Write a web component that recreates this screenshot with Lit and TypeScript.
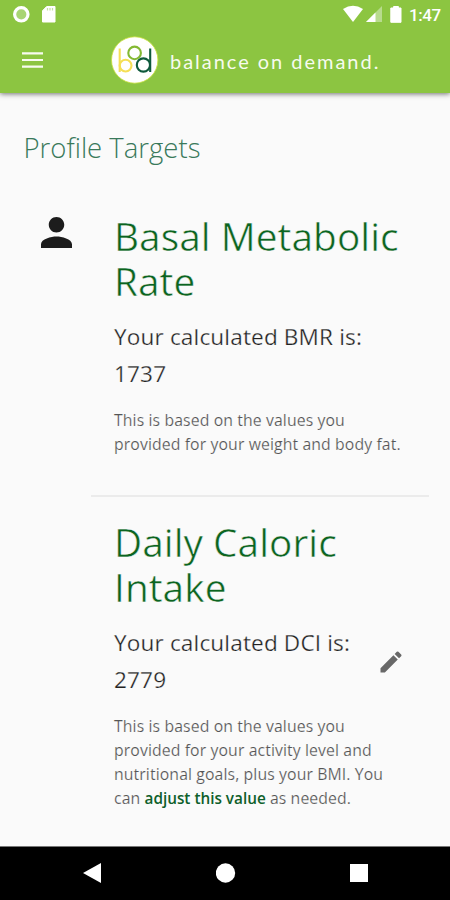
import { LitElement, html, svg, css } from "lit";
import { customElement } from "lit/decorators.js";

@customElement("status-bar")
class StatusBar extends LitElement {
  static styles = css`
    :host { display: flex; height: 28px; padding: 0 9px 0 12px; justify-content: space-between; align-items: center; box-sizing: border-box; color: #fff; }
    .group { display: flex; align-items: center; }
    svg { display: block; }
    .card { margin-left: 11px; }
    .signal { margin-left: 3px; }
    .battery { margin-left: 8px; }
    .time { margin-left: 7px; font: 500 17px/28px Roboto, sans-serif; width: 32px; white-space: nowrap; padding-top: 2px; letter-spacing: -0.4px; }
  `;
  render() {
    return html`
      <div class="group">
        <svg width="19" height="28"><circle cx="9.3" cy="14.3" r="6.7" fill="#a9d573" stroke="#fff" stroke-width="3.2"/></svg>
        <svg class="card" width="14" height="28"><path d="M4.7 6.5H13V22H.5V10.7Z" fill="#fff" stroke="#fff" stroke-linejoin="round"/><path d="M5.5 8V10.5M8 8V10.5M10.5 8V10.5" stroke="#c4e2a0" stroke-width="1.2"/></svg>
      </div>
      <div class="group">
        <svg width="20" height="28"><path d="M0 9Q10 2.5 20 9L10 22Z" fill="#fff"/></svg>
        <svg class="signal" width="16" height="28"><path d="M0 22L16 6V22Z" fill="#b8db8d"/><path d="M0 22L9.5 12.5V22Z" fill="#fff"/></svg>
        <svg class="battery" width="12" height="28"><path d="M3.6 6.5H8.4V8H11V22.3H.8V8H3.6Z" fill="#fff" stroke="#fff" stroke-linejoin="round"/></svg>
        <span class="time">1:47</span>
      </div>`;
  }
}

@customElement("brand-bar")
class BrandBar extends LitElement {
  static styles = css`
    :host { display: flex; height: 65px; align-items: center; box-sizing: border-box; padding-left: 22px; color: #fff; }
    svg { display: block; flex: none; }
    .menu { margin-bottom: 1px; }
    .logo { margin: 0 0 1px 67px; }
    .name { margin-left: 11px; font: 400 20px/28px Lato, sans-serif; letter-spacing: 1.97px; white-space: nowrap; color: #f7fbef; }
  `;
  render() {
    return html`
      <svg class="menu" width="22" height="16" viewBox="0 0 22 16"><path d="M0 1.4H21M0 8H21M0 14.6H21" stroke="#f7fbef" stroke-width="2.2"/></svg>
      <svg class="logo" width="48" height="48" viewBox="0 0 48 48" fill="none">
        <circle cx="23.7" cy="24" r="23.2" fill="#fff" stroke="#c9df3a" stroke-width=".8"/>
        <g stroke="#f5df55" stroke-width="2.1"><path d="M8.7 12.5V36"/><circle cx="14.6" cy="29.6" r="5.9"/></g>
        <circle cx="23.6" cy="16.9" r="6.3" stroke="#84b933" stroke-width="2.1"/>
        <g stroke="#0f5a3c" stroke-width="2.1"><path d="M39.2 12.5V36"/><circle cx="32.4" cy="29" r="6.6"/></g>
      </svg>
      <span class="name">balance on demand.</span>`;
  }
}

const personIcon = svg`<path d="M12 12c2.21 0 4-1.79 4-4s-1.79-4-4-4-4 1.79-4 4 1.79 4 4 4zm0 2c-2.67 0-8 1.34-8 4v2h16v-2c0-2.66-5.33-4-8-4z"/>`;
const pencilIcon = svg`<path d="M3 17.25V21h3.75L17.81 9.94l-3.75-3.75L3 17.25zM20.71 7.04a.996.996 0 0 0 0-1.41l-2.34-2.34a.996.996 0 0 0-1.41 0l-1.83 1.83 3.75 3.75 1.83-1.83z"/>`;

@customElement("app-root")
class AppRoot extends LitElement {
  static styles = css`
    :host { display: flex; flex-direction: column; height: 900px; background: #fafafa; font-family: "Open Sans", sans-serif; overflow: hidden; }
    .top { background: #8cc541; height: 92.5px; flex: none; box-shadow: 0 1px 5px rgba(0, 0, 0, .55); }
    .content { flex: 1; min-height: 0; }
    .page-title { margin: 35.5px 0 0 23.5px; font-size: 27.5px; line-height: 40px; font-weight: 300; color: #39795a; white-space: nowrap; }
    .item { display: grid; grid-template-columns: 114px minmax(0, 1fr); }
    .item.first { margin-top: 46px; height: 281px; }
    .item.second { grid-template-columns: 114px minmax(0, 1fr) 30px; padding: 23px 43px 0 0; }
    .person { display: block; fill: #1c1c1c; margin: 2.5px 0 0 41px; }
    .divider { height: 2px; margin: 0 21px 0 91px; background: #ebebeb; }
    h2 { margin: 0; font-size: 38.8px; line-height: 44.7px; font-weight: 400; letter-spacing: .05px; color: #0c6420; -webkit-text-stroke: .5px #fafafa; white-space: nowrap; }
    .value { margin: 16px 0 0; font-size: 22.6px; line-height: 36.5px; color: #222; font-weight: 400; letter-spacing: .14px; -webkit-text-stroke: .25px #fafafa; white-space: nowrap; }
    .note { margin: 16px 0 0; font-size: 15.8px; line-height: 24px; color: #555; font-weight: 400; letter-spacing: .1px; -webkit-text-stroke: .15px #fafafa; white-space: nowrap; }
    .note b { font-weight: 600; font-size: 15.3px; letter-spacing: 0; color: #0e5f2a; -webkit-text-stroke: 0; }
    .edit { display: block; fill: #686868; margin-top: 127.5px; }
    .nav { height: 54px; flex: none; background: #000; border-top: 1px solid #777; box-sizing: border-box; display: flex; justify-content: space-between; align-items: center; padding: 0 82px 2px 83px; }
  `;
  render() {
    return html`
      <header class="top"><status-bar></status-bar><brand-bar></brand-bar></header>
      <main class="content">
        <div class="page-title">Profile Targets</div>
        <section class="item first">
          <svg class="person" width="31" height="31" viewBox="4 4 16 16">${personIcon}</svg>
          <div>
            <h2>Basal Metabolic<br />Rate</h2>
            <p class="value">Your calculated BMR is:<br />1737</p>
            <p class="note">This is based on the values you<br />provided for your weight and body fat.</p>
          </div>
        </section>
        <div class="divider"></div>
        <section class="item second">
          <span></span>
          <div>
            <h2>Daily Caloric<br />Intake</h2>
            <p class="value">Your calculated DCI is:<br />2779</p>
            <p class="note">This is based on the values you<br />provided for your activity level and<br />nutritional goals, plus your BMI. You<br />can <b>adjust this value</b> as needed.</p>
          </div>
          <svg class="edit" width="28" height="28" viewBox="0 0 24 24">${pencilIcon}</svg>
        </section>
      </main>
      <footer class="nav">
        <svg width="19" height="20"><path d="M0 10L18 0V20Z" fill="#fff"/></svg>
        <svg width="20" height="20"><circle cx="9.5" cy="10" r="9.7" fill="#fff"/></svg>
        <svg width="18" height="18"><rect width="18" height="18" fill="#fff"/></svg>
      </footer>`;
  }
}
